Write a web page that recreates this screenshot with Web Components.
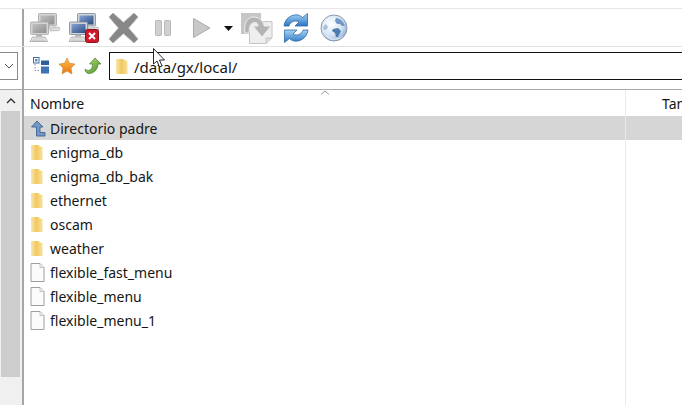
<!DOCTYPE html>
<html>
<head>
<meta charset="utf-8">
<style>
  html, body { margin: 0; height: 100%; background: #fff; overflow: hidden; }
  body { font-family: "Noto Sans", sans-serif; color: #151515; }
</style>
</head>
<body>
<ftp-app>
  <ftp-toolbar slot="toolbar"></ftp-toolbar>
  <ftp-address slot="address" path="/data/gx/local/"></ftp-address>
  <ftp-list slot="list">
    <ftp-row kind="up" selected>Directorio padre</ftp-row>
    <ftp-row kind="folder">enigma_db</ftp-row>
    <ftp-row kind="folder">enigma_db_bak</ftp-row>
    <ftp-row kind="folder">ethernet</ftp-row>
    <ftp-row kind="folder">oscam</ftp-row>
    <ftp-row kind="folder">weather</ftp-row>
    <ftp-row kind="file">flexible_fast_menu</ftp-row>
    <ftp-row kind="file">flexible_menu</ftp-row>
    <ftp-row kind="file">flexible_menu_1</ftp-row>
  </ftp-list>
</ftp-app>

<script>
const monitor = (x, y, id, active) => `
  <g transform="translate(${x} ${y})">
    <rect x=".5" y=".5" width="18" height="12.500" rx="1" fill="${active ? '#cfd3da' : '#d4d4d4'}" stroke="${active ? '#7d838e' : '#a3a3a3'}" stroke-width=".8"/>
    <rect x="2.500" y="2.500" width="14" height="9" fill="url(#${id})"/>
  </g>`;

const computersIcon = (uid, active) => `
  <svg width="32" height="30" viewBox="0 0 32 30">
    <defs>
      <linearGradient id="${uid}" x1="0" y1="0" x2="1" y2="1">
        <stop offset="0" stop-color="${active ? '#86a3d6' : '#c0c0c0'}"/>
        <stop offset="1" stop-color="${active ? '#2f4c80' : '#8f8f8f'}"/>
      </linearGradient>
    </defs>
    ${monitor(9, 0, uid, active)}
    <rect x="16" y="13.500" width="5" height="2" fill="#bdbdbd"/>
    <path d="M21 15 L30 14 Q31.500 15.500 30 17.500 L21 18 Z" fill="#dedede" stroke="#adadad" stroke-width=".7"/>
    ${monitor(1, 8.500, uid, active)}
    <rect x="7" y="21.500" width="6" height="2" fill="#b0b0b0"/>
    <path d="M1 28.500 L3.500 24 H16 L18.500 28.500 Z" fill="#e4e4e4" stroke="#a5a5a5" stroke-width=".8"/>
    <path d="M4 26 H15 M3 27.500 H16" stroke="#bcbcbc" stroke-width=".6"/>
  </svg>`;

const icons = {
  connect: computersIcon('gc', false),
  disconnect: computersIcon('gd', true) + `
    <svg class="badge" width="14" height="14" viewBox="0 0 14 14">
      <rect x=".5" y=".5" width="13" height="13" rx="2" fill="#d1182b" stroke="#8c0f1c"/>
      <path d="M4 4 L10 10 M10 4 L4 10" stroke="#fff" stroke-width="2"/>
    </svg>`,
  cancel: `<svg width="31" height="32" viewBox="0 0 31 32">
      <path d="M1 5 L5 1 L15.500 10.500 L26 1 L30 5 L20.500 16 L30 27 L26 31 L15.500 21.500 L5 31 L1 27 L10.500 16 Z" fill="#878787" stroke="#b0b0b0"/>
    </svg>`,
  pause: `<svg width="16" height="16" viewBox="0 0 16 16">
      <rect x=".5" y=".5" width="6" height="15" rx=".8" fill="#d0d0d0" stroke="#b8b8b8"/>
      <rect x="9.500" y=".5" width="6" height="15" rx=".8" fill="#d0d0d0" stroke="#b8b8b8"/>
    </svg>`,
  play: `<svg width="18" height="20" viewBox="0 0 18 20">
      <path d="M.5 .5 L17 10 L.5 19.500 Z" fill="#c8c8c8" stroke="#acacac"/>
    </svg>`,
  drop: `<svg width="9" height="5" viewBox="0 0 9 5"><path d="M0 0 H9 L4.500 5 Z" fill="#111"/></svg>`,
  sync: `<svg width="32" height="31" viewBox="0 0 32 31">
      <rect x="0" y="0" width="20" height="21" fill="#c6c6c6"/>
      <path d="M8.500 8.500 H31 V25 L25 30.500 H8.500 Z" fill="#eeeeee" stroke="#c4c4c4"/>
      <path d="M25 30.500 V25 H31" fill="#dcdcdc" stroke="#c4c4c4"/>
      <path d="M4 20 C2 9 8 3 14 4 C20 5 23 10 23 13 H30 L21 24 L12 13 H17 C17 10 15 9 12 10 C9 11 8 15 8 20 Z" fill="#b4b4b4" stroke="#ececec" stroke-width="1"/>
    </svg>`,
  refresh: `<svg width="26" height="30" viewBox="0 0 26 30">
      <defs><linearGradient id="rf" x1="0" y1="0" x2="0" y2="1">
        <stop offset="0" stop-color="#a8d4f4"/><stop offset="1" stop-color="#2a76c2"/>
      </linearGradient></defs>
      <path d="M1 13 C2 5 9 1 15 2 C17 2.500 18 3 19.500 4.500 L24.500 .5 V13 H12 L16 9 C12 6.500 7 9 6 13 Z" fill="url(#rf)" stroke="#2c6aa8" stroke-width=".8"/>
      <path d="M25 17 C24 25 17 29 11 28 C9 27.500 8 27 6.500 25.500 L1.500 29.500 V17 H14 L10 21 C14 23.500 19 21 20 17 Z" fill="url(#rf)" stroke="#2c6aa8" stroke-width=".8"/>
    </svg>`,
  globe: `<svg width="28" height="30" viewBox="0 0 28 30">
      <defs><radialGradient id="gb" cx=".38" cy=".35" r=".75">
        <stop offset="0" stop-color="#ffffff"/><stop offset=".6" stop-color="#d3e2f3"/><stop offset="1" stop-color="#7c9fcf"/>
      </radialGradient></defs>
      <circle cx="14" cy="15" r="13" fill="url(#gb)" stroke="#8a9ab0"/>
      <path d="M16 5 C20 5 24 9 25 13 L22 13 L20 11 L17 11 L15 8 Z" fill="#6f97c8"/>
      <path d="M13 16 L18 15 L21 18 L18 24 L16 24 L15 20 L12 18 Z" fill="#4f7cb0"/>
      <path d="M3 14 L6 11 L8 14 L6 17 L4 17 Z" fill="#a9c1de"/>
      <path d="M6 22 Q14 29 23 23 Q20 27 14 27 Q9 27 6 22 Z" fill="#fff" opacity=".6"/>
    </svg>`,
  tree: `<svg width="18" height="18" viewBox="0 0 18 18">
      <rect x="1.500" y=".5" width="5.500" height="5.500" fill="#fff" stroke="#3b6da8"/>
      <rect x="3" y="2" width="2.500" height="2.500" fill="#5b8ecb"/>
      <path d="M9 3.500 H17 V8 H9 Z" fill="#2c5f9c"/>
      <path d="M9 9.500 H17 V16.500 H9 Z" fill="#3d74b5"/>
      <path d="M3 7 V13.500 H8" fill="none" stroke="#7a8ca5" stroke-dasharray="1.500 1.500"/>
    </svg>`,
  star: `<svg width="18" height="18" viewBox="0 0 18 18">
      <defs><linearGradient id="st" x1="0" y1="0" x2="0" y2="1">
        <stop offset="0" stop-color="#fac13e"/><stop offset="1" stop-color="#e8751a"/>
      </linearGradient></defs>
      <path d="M9 1 L11.500 6.300 L17 7 L13 11 L14 17 L9 14 L4 17 L5 11 L1 7 L6.500 6.300 Z" fill="url(#st)" stroke="#c8802c" stroke-width=".6"/>
    </svg>`,
  back: `<svg width="18" height="18" viewBox="0 0 18 18">
      <defs><linearGradient id="bk" x1="0" y1="0" x2="1" y2="1">
        <stop offset="0" stop-color="#c0e27a"/><stop offset="1" stop-color="#3f8e2a"/>
      </linearGradient></defs>
      <path d="M11 1 L17 7 H14 C14 12 10 16.500 5 16.500 C2.500 16.500 1 14.500 1 12 C2 13 4 14 6 13 C8 12 8.500 9 8.500 7 H5.500 Z" fill="url(#bk)" stroke="#4a7f2d" stroke-width=".7"/>
    </svg>`,
  folder: `<svg width="14" height="18" viewBox="0 0 14 18">
      <defs><linearGradient id="fd" x1="0" y1="0" x2="1" y2="0">
        <stop offset="0" stop-color="#fae8b0"/><stop offset=".45" stop-color="#f0c860"/><stop offset="1" stop-color="#f8e09a"/>
      </linearGradient></defs>
      <path d="M1 2 H9 V3 L12.500 4 V17 H1 Z" fill="url(#fd)"/>
    </svg>`,
  up: `<svg width="16" height="17" viewBox="0 0 16 17">
      <path d="M7 1 L13 7 H10 V12.500 H15 V16 H6.500 V7 H1.500 Z" fill="#7198c8" stroke="#3e6292" stroke-width=".9"/>
    </svg>`,
  file: `<svg width="15" height="19" viewBox="0 0 15 19">
      <path d="M1 .5 H10 L14 4.500 V18.500 H1 Z" fill="#fbfbfb" stroke="#9e9e9e"/>
      <path d="M10 .5 V4.500 H14" fill="#eee" stroke="#c2c2c2"/>
    </svg>`
};

class FtpApp extends HTMLElement {
  constructor() {
    super();
    this.attachShadow({ mode: 'open' }).innerHTML = `
      <style>
        :host { display: flex; flex-direction: column; position: relative; width: 682px; height: 405px; overflow: hidden; }
        .cursor { position: absolute; left: 153px; top: 48px; }
      </style>
      <slot name="toolbar"></slot>
      <slot name="address"></slot>
      <slot name="list"></slot>
      <svg class="cursor" width="13" height="20" viewBox="0 0 13 20">
        <path d="M.5 .5 V16 L4 13 L6.500 19 L9 18 L6.500 12 H11.500 Z" fill="#fff" stroke="#111" stroke-width=".9"/>
      </svg>`;
  }
}

class FtpToolbar extends HTMLElement {
  constructor() {
    super();
    this.attachShadow({ mode: 'open' }).innerHTML = `
      <style>
        :host { display: flex; height: 37px; margin-top: 8px; border-top: 1px solid #e6e6e6; border-bottom: 1px solid #e2e2e2; }
        .gutter { width: 22px; border-right: 2px solid #a5a5a5; }
        .tools { flex: 1; display: flex; align-items: center; }
        .tool { display: flex; align-items: center; justify-content: center; height: 37px; position: relative; }
        .badge { position: absolute; left: 21px; top: 20px; }
        svg { display: block; }
      </style>
      <div class="gutter"></div>
      <div class="tools">
        <div class="tool" style="width:38px;margin-left:2px">${icons.connect}</div>
        <div class="tool" style="width:39px">${icons.disconnect}</div>
        <div class="tool" style="width:40px">${icons.cancel}</div>
        <div class="tool" style="width:39px;padding-top:1px;box-sizing:border-box">${icons.pause}</div>
        <div class="tool" style="width:39px">${icons.play}</div>
        <div class="tool" style="width:15px;padding-top:2px;box-sizing:border-box">${icons.drop}</div>
        <div class="tool" style="width:41px;padding-top:1px;box-sizing:border-box">${icons.sync}</div>
        <div class="tool" style="width:37px;padding-top:1px;box-sizing:border-box">${icons.refresh}</div>
        <div class="tool" style="width:40px;padding-top:1px;box-sizing:border-box">${icons.globe}</div>
      </div>`;
  }
}

class FtpAddress extends HTMLElement {
  constructor() {
    super();
    const path = this.getAttribute('path');
    this.attachShadow({ mode: 'open' }).innerHTML = `
      <style>
        :host { display: flex; height: 42px; border-bottom: 1px solid #a9a9a9; }
        .gutter { width: 22px; border-right: 2px solid #a5a5a5; padding-top: 5px; box-sizing: content-box; }
        .combo { width: 18px; height: 28px; box-sizing: border-box; border: 1px solid #8a8a8a; border-left: 0; display: flex; align-items: center; justify-content: center; background: #fff; }
        .main { flex: 1; height: 28px; margin-top: 5px; display: flex; align-items: center; padding-left: 8px; gap: 8px; min-width: 0; }
        .main svg { display: block; }
        .path { flex: 1; height: 28px; box-sizing: border-box; margin-left: -1px; margin-right: -2px; border: 1px solid #111; border-right: 0; display: flex; align-items: center; padding-left: 5px; gap: 5px; font-size: 15px; }
        .path span { position: relative; top: 1px; }
      </style>
      <div class="gutter">
        <div class="combo"><svg width="10" height="6" viewBox="0 0 10 6"><path d="M1 1 L5 5 L9 1" fill="none" stroke="#555" stroke-width="1"/></svg></div>
      </div>
      <div class="main">
        ${icons.tree}
        ${icons.star}
        ${icons.back}
        <div class="path">${icons.folder}<span>${path}</span></div>
      </div>`;
  }
}

class FtpList extends HTMLElement {
  constructor() {
    super();
    this.attachShadow({ mode: 'open' }).innerHTML = `
      <style>
        :host { display: flex; flex: 1; min-height: 0; }
        .scroll { width: 21px; border-right: 2px solid #a5a5a5; background: #f0f0f0; display: flex; flex-direction: column; padding-left: 1px; }
        .arrow { height: 21px; display: flex; align-items: center; justify-content: center; padding-right: 2px; }
        .thumb { height: 266px; background: #cdcdcd; margin-right: 2px; }
        .body { flex: 1; position: relative; min-width: 0; }
        .head { height: 26px; display: flex; align-items: center; font-size: 14px; padding-left: 6px; position: relative; }
        .sort { position: absolute; left: 296px; top: 0; }
        .tam { position: absolute; left: 638px; top: 0; height: 26px; display: flex; align-items: center; white-space: nowrap; }
        .divider { position: absolute; left: 601px; top: 0; bottom: 0; width: 1px; background: #e4ecec; }
      </style>
      <div class="scroll">
        <div class="arrow"><svg width="10" height="6" viewBox="0 0 10 6"><path d="M1 5 L5 1 L9 5" fill="none" stroke="#333" stroke-width="1.400"/></svg></div>
        <div class="thumb"></div>
      </div>
      <div class="body">
        <div class="head">Nombre
          <svg class="sort" width="10" height="5" viewBox="0 0 10 5"><path d="M1 4.500 L5 1 L9 4.500" fill="none" stroke="#9a9a9a"/></svg>
          <span class="tam">Tamaño</span>
        </div>
        <slot></slot>
        <div class="divider"></div>
      </div>`;
  }
}

class FtpRow extends HTMLElement {
  constructor() {
    super();
    this.attachShadow({ mode: 'open' }).innerHTML = `
      <style>
        :host { display: flex; align-items: center; height: 24px; font-size: 14px; }
        :host([selected]) { background: #d6d6d6; }
        .icon { width: 26px; padding-left: 6px; box-sizing: border-box; display: flex; align-items: center; }
        svg { display: block; }
      </style>
      <span class="icon">${icons[this.getAttribute('kind')]}</span>
      <slot></slot>`;
  }
}

customElements.define('ftp-app', FtpApp);
customElements.define('ftp-toolbar', FtpToolbar);
customElements.define('ftp-address', FtpAddress);
customElements.define('ftp-list', FtpList);
customElements.define('ftp-row', FtpRow);
</script>
</body>
</html>
